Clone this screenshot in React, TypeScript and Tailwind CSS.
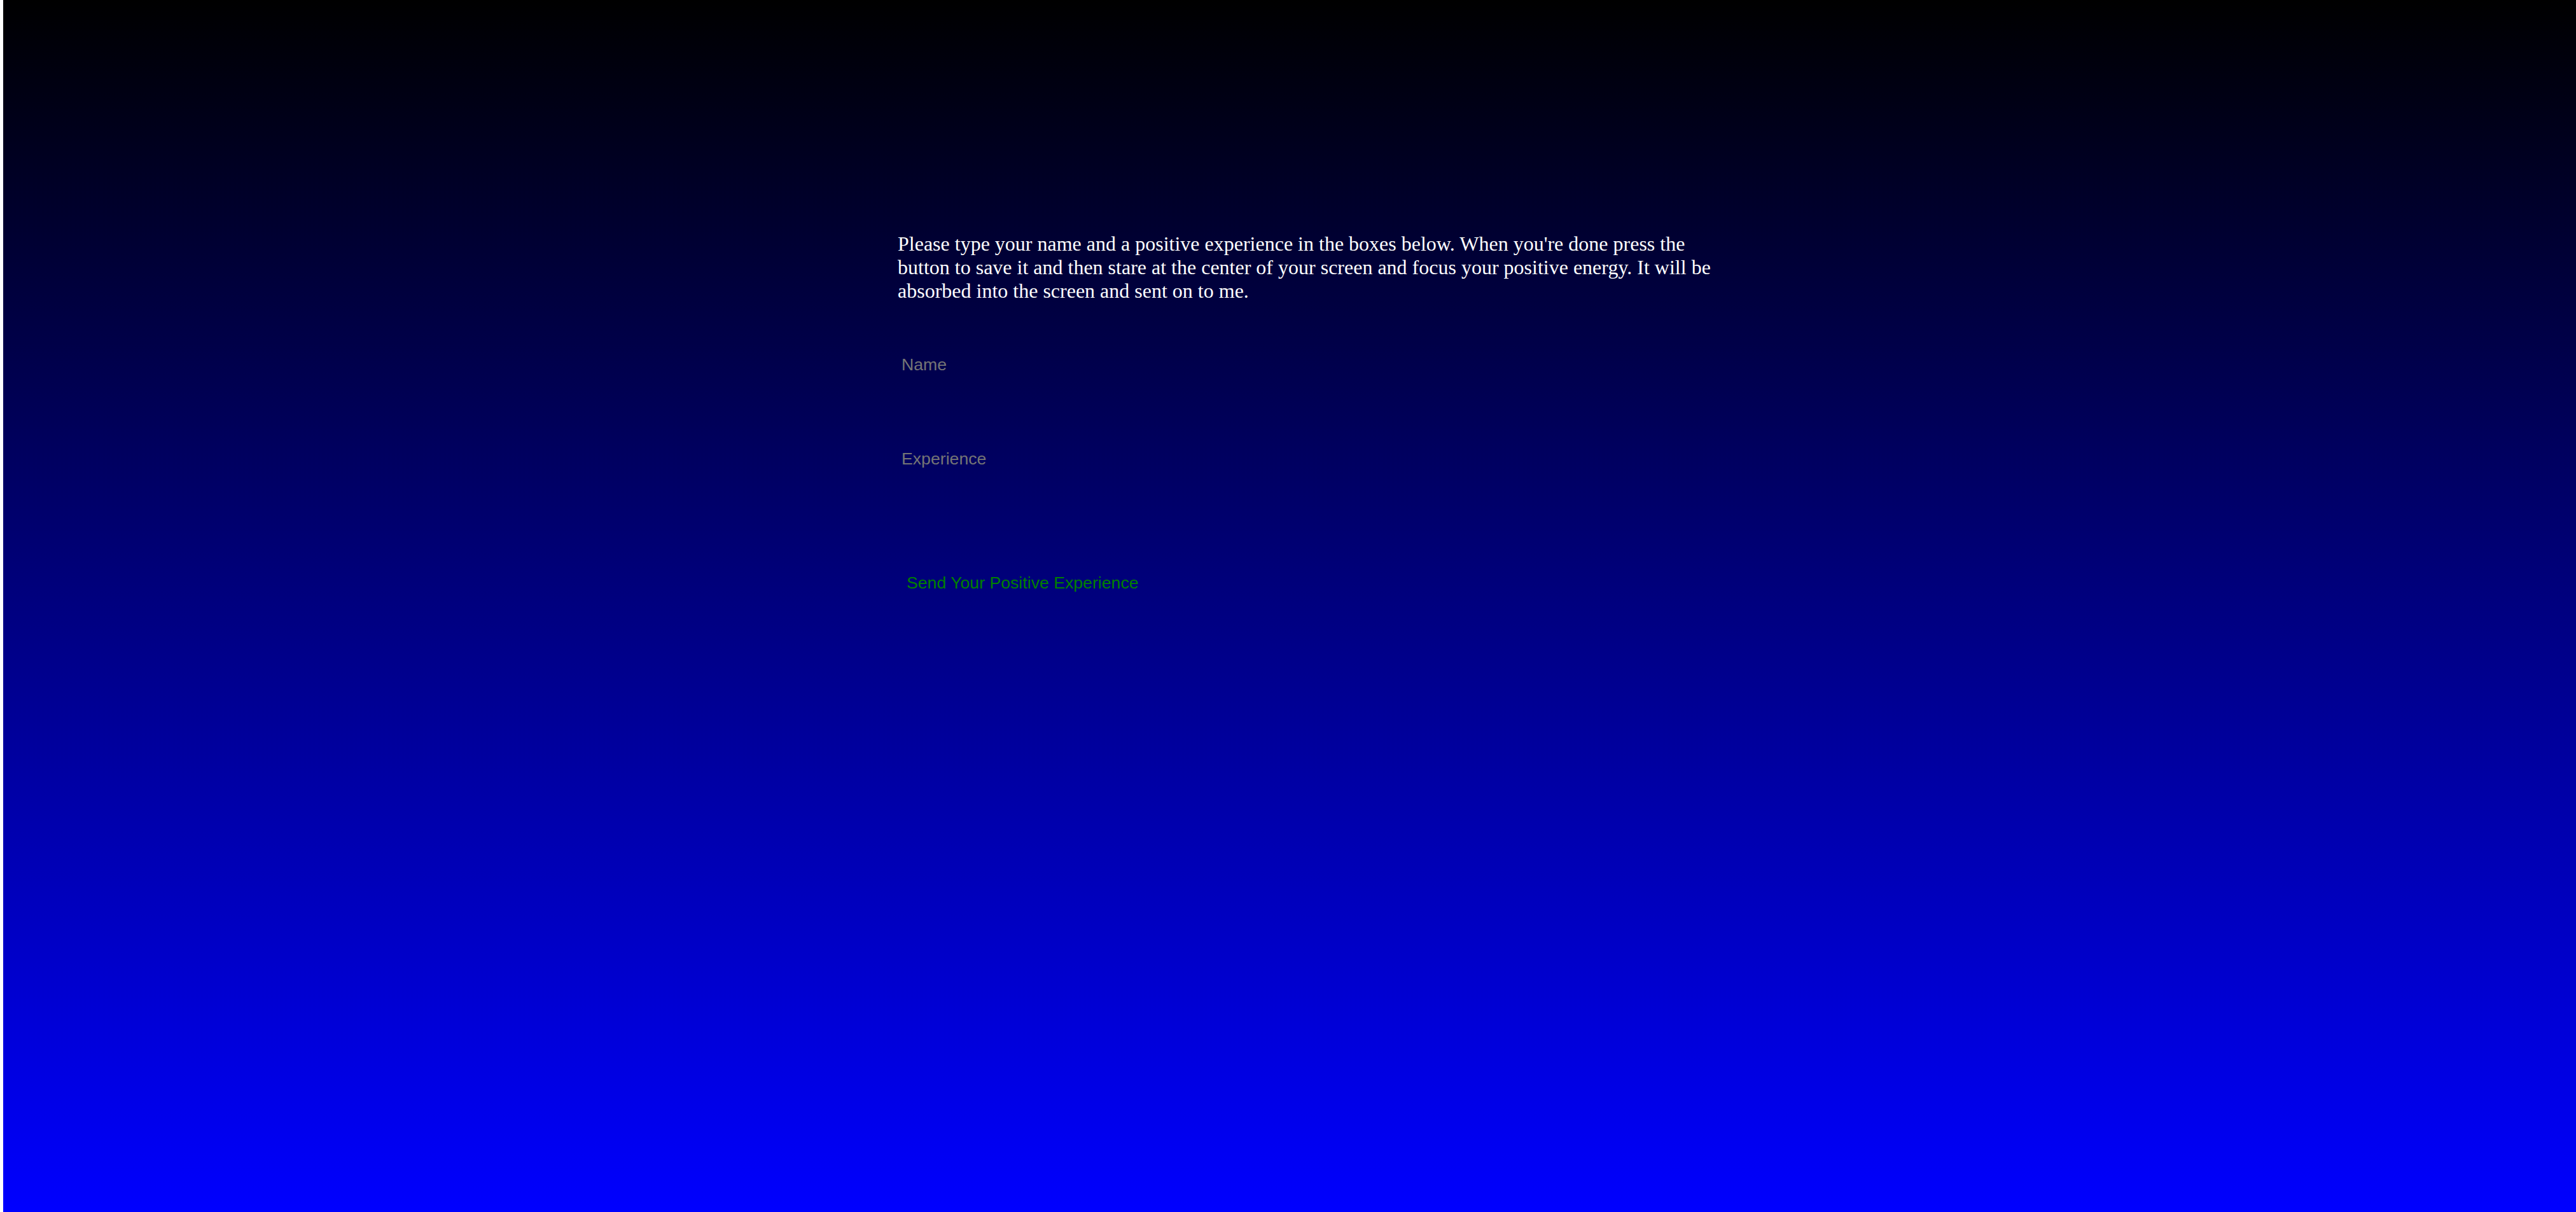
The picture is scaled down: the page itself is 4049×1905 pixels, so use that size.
import React from 'react'

export default function App() {
  return (
    <div className="flex h-[1905px] w-full">
      {/* thin white strip at the left edge */}
      <div className="w-[5px] shrink-0 bg-white" />

      <div className="flex flex-1 flex-col items-start bg-[linear-gradient(to_bottom,#000000,#0000ff)] pl-[1406px] pt-[365px]">
        <p className="w-[1300px] font-['Liberation_Serif','Times_New_Roman',serif] text-[32px] leading-[36.8px] text-white">
          Please type your name and a positive experience in the boxes below. When you're done press the button to save
          it and then stare at the center of your screen and focus your positive energy. It will be absorbed into the
          screen and sent on to me.
        </p>

        <input
          type="text"
          placeholder="Name"
          className="-ml-[2px] mt-[75px] h-[47px] w-[480px] bg-transparent px-[8px] py-[8px] font-['Liberation_Sans',Arial,sans-serif] text-[26.67px] leading-[31px] text-white outline-none placeholder:text-[#757575]"
        />

        <textarea
          placeholder="Experience"
          className="-ml-[2px] mt-[101px] h-[110px] w-[480px] resize-none bg-transparent px-[8px] py-[8px] font-['Liberation_Sans',Arial,sans-serif] text-[26.67px] leading-[31px] text-white outline-none placeholder:text-[#757575]"
        />

        <button className="-ml-[2px] mt-[87px] bg-transparent px-[16px] py-[6px] font-['Liberation_Sans',Arial,sans-serif] text-[26.67px] leading-[31px] text-[#008000]">
          Send Your Positive Experience
        </button>
      </div>
    </div>
  )
}
